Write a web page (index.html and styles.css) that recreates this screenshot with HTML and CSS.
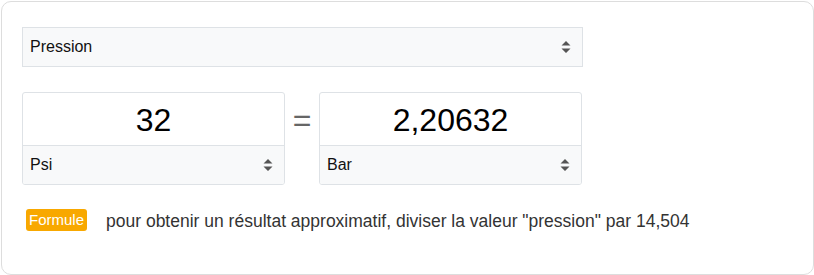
FILE: index.html
```html
<!DOCTYPE html>
<html lang="fr">
<head>
    <meta charset="UTF-8">
    <title>Convertisseur - Pression</title>
    <link rel="stylesheet" href="styles.css">
</head>
<body>

    <div class="converter-card">
        <div class="select-box type-select">
            <span>Pression</span>
            <svg class="arrows" width="10" height="14" viewBox="0 0 10 14"><path d="M5 1 L9.5 5.5 L0.5 5.5 Z M0.5 8.5 L9.5 8.5 L5 13 Z" fill="#555"/></svg>
        </div>

        <div class="convert-row">
            <div class="unit-box">
                <div class="value">32</div>
                <div class="select-box unit-select">
                    <span>Psi</span>
                    <svg class="arrows" width="10" height="14" viewBox="0 0 10 14"><path d="M5 1 L9.5 5.5 L0.5 5.5 Z M0.5 8.5 L9.5 8.5 L5 13 Z" fill="#555"/></svg>
                </div>
            </div>
            <div class="equals">=</div>
            <div class="unit-box">
                <div class="value">2,20632</div>
                <div class="select-box unit-select">
                    <span>Bar</span>
                    <svg class="arrows" width="10" height="14" viewBox="0 0 10 14"><path d="M5 1 L9.5 5.5 L0.5 5.5 Z M0.5 8.5 L9.5 8.5 L5 13 Z" fill="#555"/></svg>
                </div>
            </div>
        </div>

        <div class="formula">
            <span class="badge">Formule</span>
            <span class="formula-text">pour obtenir un résultat approximatif, diviser la valeur "pression" par 14,504</span>
        </div>
    </div>

</body>
</html>
```

FILE: styles.css
```css
body {
    margin: 0;
    padding: 1px;
    font-family: "Liberation Sans", Arial, sans-serif;
    background: #fff;
}

.converter-card {
    box-sizing: border-box;
    width: 813px;
    height: 274px;
    border: 1px solid #ddd;
    border-radius: 10px;
    padding: 25px 20px;
}

.select-box {
    box-sizing: border-box;
    display: flex;
    align-items: center;
    justify-content: space-between;
    height: 40px;
    padding: 0 11px 0 7px;
    background: #f8f9fa;
    border: 1px solid #dee2e6;
    font-size: 16px;
    color: #111;
}

.type-select {
    width: 561px;
}

.convert-row {
    display: flex;
    margin-top: 25px;
}

.unit-box {
    box-sizing: border-box;
    width: 263px;
    border: 1px solid #dee2e6;
    border-radius: 3px;
    overflow: hidden;
}

.value {
    height: 52px;
    line-height: 54px;
    text-align: center;
    font-size: 32px;
    color: #000;
}

.unit-select {
    border: none;
    border-top: 1px solid #dee2e6;
    height: 39px;
}

.equals {
    width: 34px;
    text-align: center;
    font-size: 32px;
    line-height: 56px;
    color: #666;
}

.formula {
    display: flex;
    align-items: center;
    margin-top: 24px;
    padding-left: 4px;
}

.badge {
    display: inline-block;
    height: 22px;
    line-height: 22px;
    padding: 0 3px;
    background: #f8a800;
    color: #fff;
    border-radius: 3px;
    font-size: 15px;
}

.formula-text {
    margin-left: 19px;
    font-size: 17.5px;
    color: #333;
    position: relative;
    top: 1px;
}
```
